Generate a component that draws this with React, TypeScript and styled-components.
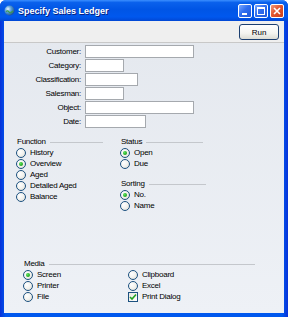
import React from "react";
import styled, { createGlobalStyle } from "styled-components";

const GlobalStyle = createGlobalStyle`
  html, body {
    margin: 0;
    padding: 0;
    background: #ffffff;
  }
  * {
    box-sizing: border-box;
  }
`;

const Frame = styled.div`
  width: 288px;
  height: 317px;
  display: flex;
  flex-direction: column;
  background: linear-gradient(to right, #0831d9 0%, #0058ee 2%, #0058ee 98%, #0831d9 100%);
  border-radius: 6px 6px 0 0;
  overflow: hidden;
  font-family: "Liberation Sans", Arial, sans-serif;
  font-size: 8px;
  letter-spacing: -0.25px;
  color: #000000;
`;

const TitleBar = styled.div`
  height: 21px;
  display: flex;
  align-items: center;
  padding: 0 4px 0 4px;
  background: linear-gradient(
    to bottom,
    #3b8fff 0%,
    #0a61ec 12%,
    #0055e5 45%,
    #0058ee 80%,
    #0147d4 100%
  );
`;

const AppIcon = styled.svg`
  width: 11px;
  height: 11px;
  flex-shrink: 0;
`;

const Title = styled.div`
  margin-left: 3px;
  flex: 1;
  color: #ffffff;
  font-weight: bold;
  font-size: 9px;
  letter-spacing: 0;
  text-shadow: 1px 1px 0 #0a1f80;
  white-space: nowrap;
`;

const CaptionButtons = styled.div`
  display: flex;
  gap: 2px;
  margin-top: 1px;
`;

const CaptionButton = styled.div<{ close?: boolean }>`
  width: 14px;
  height: 14px;
  border: 1px solid #ffffff;
  border-radius: 2px;
  display: flex;
  align-items: center;
  justify-content: center;
  background: ${(p) =>
    p.close
      ? "linear-gradient(135deg, #f09a7c 0%, #e2562f 45%, #c8401c 100%)"
      : "linear-gradient(135deg, #7aa8ff 0%, #2f6ef0 45%, #2158d8 100%)"};
`;

const Body = styled.div`
  flex: 1;
  margin: 0 4px 4px 4px;
  display: flex;
  flex-direction: column;
  background: linear-gradient(to bottom, #e4e8ee 0%, #eef1f6 100%);
`;

const Toolbar = styled.div`
  height: 22px;
  display: flex;
  justify-content: flex-end;
  align-items: flex-start;
  padding: 3px 5px 0 0;
  background: #efefef;
  border-bottom: 1px solid #c8c8c8;
`;

const RunButton = styled.button`
  width: 40px;
  height: 16px;
  padding: 0;
  border: 1px solid #1c3f70;
  border-radius: 3px;
  background: linear-gradient(to bottom, #ffffff 0%, #f3f3ef 60%, #dcdcd4 100%);
  font-family: "Liberation Sans", Arial, sans-serif;
  font-size: 8px;
  color: #000000;
`;

const Content = styled.div`
  flex: 1;
  display: flex;
  flex-direction: column;
  padding: 2px 0 0 0;
`;

const Fields = styled.div`
  display: flex;
  flex-direction: column;
  gap: 1px;
`;

const FieldRow = styled.div`
  display: flex;
  align-items: center;
  gap: 4px;
  height: 13px;
`;

const FieldLabel = styled.label`
  width: 77px;
  text-align: right;
  white-space: nowrap;
`;

const FieldInput = styled.div<{ w: number }>`
  width: ${(p) => p.w}px;
  height: 13px;
  background: #ffffff;
  border: 1px solid #a5a9ae;
`;

const Groups = styled.div`
  display: flex;
  margin-top: 8px;
  padding-left: 12px;
`;

const Column = styled.div<{ w: number }>`
  width: ${(p) => p.w}px;
  display: flex;
  flex-direction: column;
`;

const GroupHeader = styled.div<{ lineW: number }>`
  height: 11px;
  display: flex;
  align-items: center;
  gap: 4px;
  padding-left: 1px;

  &::after {
    content: "";
    width: ${(p) => p.lineW}px;
    height: 1px;
    margin-top: 2px;
    background: #c4c7cc;
  }
`;

const Option = styled.div`
  height: 11px;
  display: flex;
  align-items: center;
  gap: 4px;
  white-space: nowrap;
`;

const RadioCircle = styled.span<{ on?: boolean }>`
  width: 10px;
  height: 10px;
  border-radius: 50%;
  border: 1px solid #1c5180;
  background: radial-gradient(circle at 35% 35%, #ffffff 0%, #f2f2ee 50%, #d6d6ce 100%);
  display: flex;
  align-items: center;
  justify-content: center;

  &::after {
    content: "";
    display: ${(p) => (p.on ? "block" : "none")};
    width: 4px;
    height: 4px;
    border-radius: 50%;
    background: radial-gradient(circle at 35% 35%, #5ce65c 0%, #21a121 70%);
  }
`;

const CheckBox = styled.span`
  width: 10px;
  height: 10px;
  border: 1px solid #1c5180;
  background: linear-gradient(135deg, #e6e6e0 0%, #ffffff 100%);
  display: flex;
  align-items: center;
  justify-content: center;
`;

const Spacer = styled.div<{ h: number }>`
  height: ${(p) => p.h}px;
`;

const MediaSection = styled.div`
  margin-top: auto;
  margin-bottom: 11px;
  padding-left: 19px;
  display: flex;
  flex-direction: column;
`;

const MediaGrid = styled.div`
  display: grid;
  grid-template-columns: 105px 120px;
`;

function Radio({ label, on }: { label: string; on?: boolean }) {
  return (
    <Option>
      <RadioCircle on={on} />
      <span>{label}</span>
    </Option>
  );
}

const fields = [
  { label: "Customer:", w: 109 },
  { label: "Category:", w: 39 },
  { label: "Classification:", w: 53 },
  { label: "Salesman:", w: 39 },
  { label: "Object:", w: 109 },
  { label: "Date:", w: 61 },
];

export default function App() {
  return (
    <>
      <GlobalStyle />
      <Frame>
        <TitleBar>
          <AppIcon viewBox="0 0 11 11">
            <defs>
              <radialGradient id="globe" cx="35%" cy="35%" r="70%">
                <stop offset="0%" stopColor="#e8f4ff" />
                <stop offset="45%" stopColor="#5aa0d8" />
                <stop offset="100%" stopColor="#1a4f8a" />
              </radialGradient>
            </defs>
            <circle cx="5.5" cy="5.5" r="5" fill="url(#globe)" />
            <path d="M2 6.5 Q4 5 5 7 T9 6" stroke="#3d9a4a" strokeWidth="1.2" fill="none" />
          </AppIcon>
          <Title>Specify Sales Ledger</Title>
          <CaptionButtons>
            <CaptionButton>
              <svg width="12" height="12" viewBox="0 0 12 12">
                <rect x="3" y="8" width="5" height="2" fill="#ffffff" />
              </svg>
            </CaptionButton>
            <CaptionButton>
              <svg width="12" height="12" viewBox="0 0 12 12">
                <rect x="2.5" y="2.5" width="7" height="7" fill="none" stroke="#ffffff" strokeWidth="1" />
                <rect x="2.5" y="2.5" width="7" height="1.5" fill="#ffffff" />
              </svg>
            </CaptionButton>
            <CaptionButton close>
              <svg width="12" height="12" viewBox="0 0 12 12">
                <path d="M3 3 L9 9 M9 3 L3 9" stroke="#ffffff" strokeWidth="1.6" />
              </svg>
            </CaptionButton>
          </CaptionButtons>
        </TitleBar>
        <Body>
          <Toolbar>
            <RunButton>Run</RunButton>
          </Toolbar>
          <Content>
            <Fields>
              {fields.map((f) => (
                <FieldRow key={f.label}>
                  <FieldLabel>{f.label}</FieldLabel>
                  <FieldInput w={f.w} />
                </FieldRow>
              ))}
            </Fields>
            <Groups>
              <Column w={104}>
                <GroupHeader lineW={53}>Function</GroupHeader>
                <Radio label="History" />
                <Radio label="Overview" on />
                <Radio label="Aged" />
                <Radio label="Detailed Aged" />
                <Radio label="Balance" />
              </Column>
              <Column w={100}>
                <GroupHeader lineW={57}>Status</GroupHeader>
                <Radio label="Open" on />
                <Radio label="Due" />
                <Spacer h={9} />
                <GroupHeader lineW={57}>Sorting</GroupHeader>
                <Radio label="No." on />
                <Radio label="Name" />
              </Column>
            </Groups>
            <MediaSection>
              <GroupHeader lineW={206}>Media</GroupHeader>
              <MediaGrid>
                <Radio label="Screen" on />
                <Radio label="Clipboard" />
                <Radio label="Printer" />
                <Radio label="Excel" />
                <Radio label="File" />
                <Option>
                  <CheckBox>
                    <svg width="8" height="8" viewBox="0 0 8 8">
                      <path d="M1 4 L3 6 L7 1.5" stroke="#21a121" strokeWidth="1.6" fill="none" />
                    </svg>
                  </CheckBox>
                  <span>Print Dialog</span>
                </Option>
              </MediaGrid>
            </MediaSection>
          </Content>
        </Body>
      </Frame>
    </>
  );
}
